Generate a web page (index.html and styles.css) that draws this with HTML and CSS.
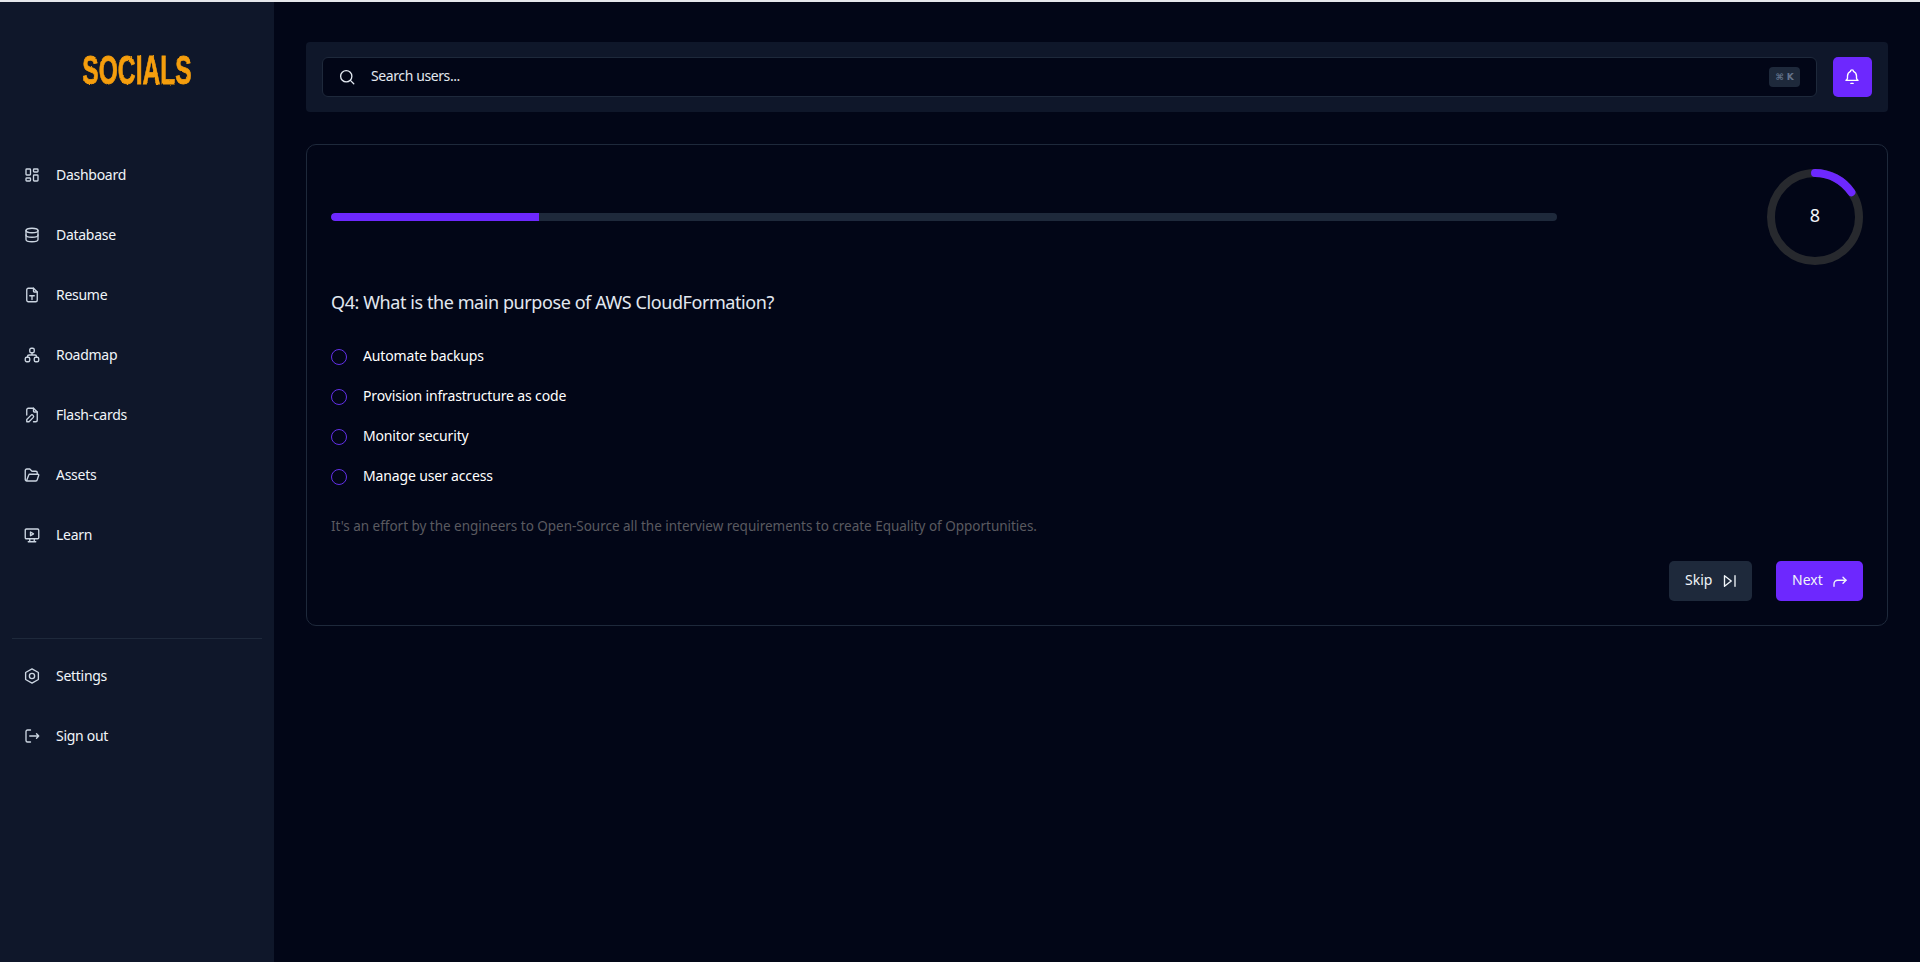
FILE: index.html
```html
<!DOCTYPE html>
<html lang="en">
<head>
<meta charset="utf-8">
<title>Socials</title>
<link rel="stylesheet" href="styles.css">
</head>
<body>
<svg class="defs" width="0" height="0" aria-hidden="true"><filter id="rough" x="-5%" y="-5%" width="110%" height="110%"><feTurbulence type="fractalNoise" baseFrequency="0.45" numOctaves="2" seed="4"/><feDisplacementMap in="SourceGraphic" scale="2.200"/></filter></svg>
<div class="topline"></div>
<div class="app">
  <aside class="sidebar">
    <div class="logo">SOCIALS</div>
    <nav class="nav">
      <a class="nav-item"><svg class="ico" viewBox="0 0 24 24"><rect x="4" y="4" width="6" height="8" rx="1"/><rect x="4" y="16" width="6" height="4" rx="1"/><rect x="14" y="12" width="6" height="8" rx="1"/><rect x="14" y="4" width="6" height="4" rx="1"/></svg><span>Dashboard</span></a>
      <a class="nav-item"><svg class="ico" viewBox="0 0 24 24"><ellipse cx="12" cy="6" rx="8" ry="3"/><path d="M4 6v6c0 1.7 3.6 3 8 3s8-1.300 8-3V6"/><path d="M4 12v6c0 1.700 3.600 3 8 3s8-1.300 8-3v-6"/></svg><span>Database</span></a>
      <a class="nav-item"><svg class="ico" viewBox="0 0 24 24"><path d="M14 3v4a1 1 0 0 0 1 1h4"/><path d="M17 21H7a2 2 0 0 1-2-2V5a2 2 0 0 1 2-2h7l5 5v11a2 2 0 0 1-2 2z"/><path d="M9 13h6M12 13v5"/></svg><span>Resume</span></a>
      <a class="nav-item"><svg class="ico" viewBox="0 0 24 24"><rect x="3" y="15" width="6" height="6" rx="2"/><rect x="15" y="15" width="6" height="6" rx="2"/><rect x="9" y="3" width="6" height="6" rx="2"/><path d="M6 15v-1a2 2 0 0 1 2-2h8a2 2 0 0 1 2 2v1M12 9v3"/></svg><span>Roadmap</span></a>
      <a class="nav-item"><svg class="ico" viewBox="0 0 24 24"><path d="M14 3v4a1 1 0 0 0 1 1h4"/><path d="M5 12V5a2 2 0 0 1 2-2h7l5 5v11a2 2 0 0 1-2 2h-3"/><path d="M10.500 12.500a2 2 0 0 1 3 3L8 21H5v-3z"/></svg><span>Flash-cards</span></a>
      <a class="nav-item"><svg class="ico" viewBox="0 0 24 24"><path d="M5 19l2.800-7.300a1 1 0 0 1 .9-.7H20a1 1 0 0 1 1 1.300l-2 6a2 2 0 0 1-2 1.700H5a2 2 0 0 1-2-2V6a2 2 0 0 1 2-2h4l3 3h5a2 2 0 0 1 2 2v2"/></svg><span>Assets</span></a>
      <a class="nav-item"><svg class="ico" viewBox="0 0 24 24"><rect x="3" y="4" width="18" height="13" rx="1.500"/><path d="M7 21h10M9 17v4M15 17v4"/><path d="M10 8l4 2.500-4 2.500z"/></svg><span>Learn</span></a>
    </nav>
    <div class="divider"></div>
    <nav class="nav">
      <a class="nav-item"><svg class="ico" viewBox="0 0 24 24"><path d="M12 2.500l8.500 4.800v9.400L12 21.500l-8.500-4.800V7.300z"/><circle cx="12" cy="12" r="3.500"/></svg><span>Settings</span></a>
      <a class="nav-item"><svg class="ico" viewBox="0 0 24 24"><path d="M10 4H6a2 2 0 0 0-2 2v12a2 2 0 0 0 2 2h4"/><path d="M9 12h12M18 9l3 3-3 3"/></svg><span>Sign out</span></a>
    </nav>
  </aside>
  <main class="main">
    <header class="topbar">
      <div class="search">
        <svg class="ico search-ico" viewBox="0 0 24 24"><circle cx="11" cy="11" r="7.500"/><path d="M21 21l-4.500-4.500"/></svg>
        <span class="search-text">Search users...</span>
        <kbd class="kbd">⌘ K</kbd>
      </div>
      <button class="bell"><svg class="ico" viewBox="0 0 24 24"><path d="M10 4.500a2 2 0 1 1 4 0 7 7 0 0 1 4 6v3a4 4 0 0 0 2 3H4a4 4 0 0 0 2-3v-3a7 7 0 0 1 4-6"/><path d="M10.500 20.500h3"/></svg></button>
    </header>
    <section class="card">
      <div class="progress-row">
        <div class="progress"><div class="progress-fill" style="width:17%"></div></div>
        <div class="ring">
          <svg viewBox="0 0 96 96"><circle class="ring-bg" cx="48" cy="48" r="44"/><circle class="ring-fg" cx="48" cy="48" r="44" pathLength="100" stroke-dasharray="15.500 100" transform="rotate(-90 48 48)"/></svg>
          <span class="ring-num">8</span>
        </div>
      </div>
      <h2 class="question">Q4: What is the main purpose of AWS CloudFormation?</h2>
      <ul class="options">
        <li class="option"><span class="radio"></span><span class="option-text">Automate backups</span></li>
        <li class="option"><span class="radio"></span><span class="option-text">Provision infrastructure as code</span></li>
        <li class="option"><span class="radio"></span><span class="option-text">Monitor security</span></li>
        <li class="option"><span class="radio"></span><span class="option-text">Manage user access</span></li>
      </ul>
      <p class="hint">It's an effort by the engineers to Open-Source all the interview requirements to create Equality of Opportunities.</p>
      <div class="actions">
        <button class="btn btn-skip"><span class="btn-text">Skip</span> <svg class="ico" viewBox="0 0 24 24"><path d="M6 5l9 7-9 7z"/><path d="M20 5v14"/></svg></button>
        <button class="btn btn-next"><span class="btn-text">Next</span> <svg class="ico" viewBox="0 0 24 24"><path d="M4 19v-3a5 5 0 0 1 5-5h11"/><path d="M16 7l4 4-4 4"/></svg></button>
      </div>
    </section>
  </main>
</div>
</body>
</html>
```
FILE: styles.css
```css
* { box-sizing: border-box; }
html, body { margin: 0; height: 100%; }
body {
  background: #020617;
  color: #f1f5f9;
  font-family: "Noto Sans", "Open Sans", sans-serif;
  font-size: 14px;
  overflow: hidden;
}
.defs { position: absolute; }
.topline { height: 2px; background: #e5e7eb; }
.app { display: flex; height: 960px; }
.ico { width: 18px; height: 18px; fill: none; stroke: currentColor; stroke-width: 1.8; stroke-linecap: round; stroke-linejoin: round; flex: none; }

.sidebar { width: 274px; flex: none; background: #0f172a; padding: 0 12px; }
.logo {
  margin-top: 49px;
  height: 38px;
  line-height: 38px;
  text-align: center;
  color: #f59e0b;
  font-family: "Liberation Sans Narrow", "Liberation Sans", sans-serif;
  font-weight: 700;
  font-size: 41px;
  -webkit-text-stroke: 0.8px #f59e0b;
  transform: scaleX(0.6);
  filter: url(#rough);
}
.nav { display: flex; flex-direction: column; }
.sidebar > .nav:nth-of-type(1) { margin-top: 56px; }
.nav-item { height: 60px; display: flex; align-items: center; gap: 15px; padding-left: 11px; font-size: 14px; color: #f1f5f9; letter-spacing: -0.28px; }
.nav-item span { margin-bottom: 2px; }
.nav-item .ico { color: #cbd5e1; }
.divider { height: 1px; background: #1e293b; margin-top: 73px; margin-bottom: 7px; }

.main { flex: 1; padding: 40px 32px 0; min-width: 0; }
.topbar { height: 70px; background: #0f172a; border-radius: 4px; padding: 15px 16px; display: flex; gap: 16px; align-items: center; }
.search { flex: 1; height: 40px; background: #020617; border: 1px solid #1e293b; border-radius: 6px; display: flex; align-items: center; padding: 0 16px 0 15px; color: #e2e8f0; }
.search-ico { width: 18px; height: 18px; }
.search-text { margin-left: 15px; margin-bottom: 3px; flex: 1; font-size: 14px; letter-spacing: -0.4px; }
.kbd { background: #1e293b; color: #64748b; font-family: "DejaVu Sans", sans-serif; font-size: 9px; border-radius: 4px; height: 20px; width: 31px; display: flex; align-items: center; justify-content: center; font-weight: 700; }
.bell { width: 39px; height: 40px; background: #6d28fe; border: 0; border-radius: 5px; color: #fff; display: flex; align-items: center; justify-content: center; padding: 0 1px 1px 0; }
.bell .ico { width: 18px; height: 18px; }

.card { margin-top: 32px; height: 482px; border: 1px solid #1e293b; border-radius: 10px; padding: 24px 24px 0; }
.progress-row { display: flex; align-items: center; justify-content: space-between; height: 96px; }
.progress { width: 1226px; height: 8px; background: #1e293b; border-radius: 4px; overflow: hidden; }
.progress-fill { height: 100%; background: #6d28fe; border-radius: 4px 0 0 4px; }
.ring { position: relative; width: 96px; height: 96px; }
.ring svg { width: 96px; height: 96px; display: block; fill: none; stroke-width: 8; }
.ring-bg { stroke: #27292e; }
.ring-fg { stroke: #6d28fe; stroke-linecap: round; }
.ring-num { position: absolute; inset: 0 0 4px; display: flex; align-items: center; justify-content: center; font-size: 18px; }
.question { margin: 19px 0 0; height: 36px; line-height: 36px; font-size: 18px; font-weight: 400; color: #e2e8f0; letter-spacing: -0.42px; }
.options { list-style: none; margin: 16px 0 0; padding: 0; display: flex; flex-direction: column; }
.option { height: 40px; display: flex; align-items: center; gap: 16px; font-size: 14px; font-weight: 400; color: #fff; letter-spacing: -0.15px; }
.option-text { margin-bottom: 2px; }
.radio { width: 16px; height: 16px; margin-top: 2px; border: 1.500px solid #6230e8; border-radius: 50%; flex: none; }
.hint { margin: 20px 0 0; height: 20px; line-height: 20px; font-size: 13.500px; color: #5a5a60; letter-spacing: -0.02px; }
.actions { margin-top: 25px; display: flex; justify-content: flex-end; gap: 24px; }
.btn { height: 40px; border: 0; border-radius: 5px; display: flex; align-items: center; gap: 8px; padding: 0 16px; font: inherit; font-size: 14px; color: #f1f5f9; }
.btn-text { margin-bottom: 3px; }
.btn .ico { width: 18px; height: 18px; }
.btn-skip { background: #1e293b; width: 83px; }
.btn-next { background: #6d28fe; width: 87px; }
```
